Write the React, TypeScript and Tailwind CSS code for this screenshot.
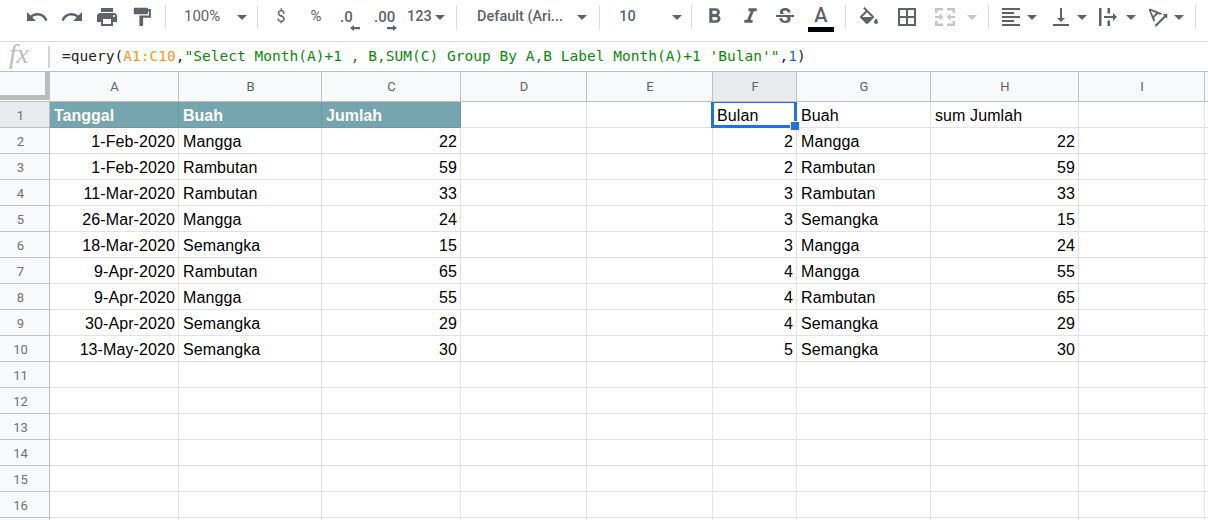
import type { ReactNode } from 'react'
import { clsx } from 'clsx'
import {
    MdBorderAll,
    MdFormatAlignLeft,
    MdFormatBold,
    MdFormatItalic,
    MdPrint,
    MdRedo,
    MdStrikethroughS,
    MdTextRotationAngleup,
    MdUndo,
    MdVerticalAlignBottom,
} from 'react-icons/md'

type Column = { name: string; width: string }

const COLUMNS: Column[] = [
    { name: 'A', width: 'w-[129px]' },
    { name: 'B', width: 'w-[143px]' },
    { name: 'C', width: 'w-[139px]' },
    { name: 'D', width: 'w-[126px]' },
    { name: 'E', width: 'w-[126px]' },
    { name: 'F', width: 'w-[84px]' },
    { name: 'G', width: 'w-[134px]' },
    { name: 'H', width: 'w-[148px]' },
    { name: 'I', width: 'w-[126px]' },
    { name: '', width: 'w-[126px]' },
]

const ROWS: string[][] = [
    ['Tanggal', 'Buah', 'Jumlah', '', '', 'Bulan', 'Buah', 'sum Jumlah'],
    ['1-Feb-2020', 'Mangga', '22', '', '', '2', 'Mangga', '22'],
    ['1-Feb-2020', 'Rambutan', '59', '', '', '2', 'Rambutan', '59'],
    ['11-Mar-2020', 'Rambutan', '33', '', '', '3', 'Rambutan', '33'],
    ['26-Mar-2020', 'Mangga', '24', '', '', '3', 'Semangka', '15'],
    ['18-Mar-2020', 'Semangka', '15', '', '', '3', 'Mangga', '24'],
    ['9-Apr-2020', 'Rambutan', '65', '', '', '4', 'Mangga', '55'],
    ['9-Apr-2020', 'Mangga', '55', '', '', '4', 'Rambutan', '65'],
    ['30-Apr-2020', 'Semangka', '29', '', '', '4', 'Semangka', '29'],
    ['13-May-2020', 'Semangka', '30', '', '', '5', 'Semangka', '30'],
    [],
    [],
    [],
    [],
    [],
    [],
    [],
]

// The last row is only partly in view and has no label
const LABELLED_ROWS = 16

const SELECTED = { row: 0, column: 5 }

const Slot = ({
    width,
    start,
    children,
}: {
    width: string
    start?: boolean
    children?: ReactNode
}) => (
    <div
        className={clsx(
            'flex h-full shrink-0 items-center whitespace-nowrap',
            start ? 'justify-start' : 'justify-center',
            width,
        )}
    >
        {children}
    </div>
)

const Separator = () => <div className="h-6 w-px shrink-0 bg-[#dadce0]" />

const Caret = ({ disabled }: { disabled?: boolean }) => (
    <svg
        width="10"
        height="5"
        viewBox="0 0 10 5"
        className={clsx(
            'mt-0.5 shrink-0',
            disabled ? 'fill-[#c4c5c7]' : 'fill-[#5f6368]',
        )}
    >
        <path d="M0 0h10L5 5z" />
    </svg>
)

const PaintFormatIcon = () => (
    <svg width="24" height="24" viewBox="0 0 24 24" fill="currentColor">
        <path d="M18 4V3.6c0-.4-.4-.8-.8-.8H4.6c-.4 0-.8.4-.8.8v4.8c0 .4.4.8.8.8h12.6c.4 0 .8-.4.8-.8V6.4h1v4.2H9.4V20c0 .6.4 1 .9 1h1.9c.5 0 .9-.4.9-1v-7.2h7.8V4z" />
    </svg>
)

const FillColorIcon = () => (
    <svg width="24" height="24" viewBox="0 0 24 24" fill="currentColor">
        <path d="M16.56 8.94 7.62 0 6.21 1.41l2.38 2.38-5.15 5.15c-.59.59-.59 1.54 0 2.12l5.5 5.5c.29.29.68.44 1.06.44s.77-.15 1.06-.44l5.5-5.5c.59-.58.59-1.53 0-2.12zM5.21 10 10 5.21 14.79 10zM19 11.5s-2 2.17-2 3.5c0 1.1.9 2 2 2s2-.9 2-2c0-1.33-2-3.5-2-3.5z" />
    </svg>
)

const MergeCellsIcon = () => (
    <svg width="22" height="20" viewBox="0 0 22 20" fill="currentColor">
        <path d="M1 1h8v2.4H3.4V6H1zM13 1h8v5h-2.4V3.4H13zM1 14h2.4v2.6H9V19H1zM18.6 14H21v5h-8v-2.4h5.6z" />
        <path d="M1 9h4.500V6.500L9.500 10l-4 3.500V11H1zM21 9h-4.500V6.500l-4 3.500 4 3.500V11H21z" />
    </svg>
)

const OverflowIcon = () => (
    <svg width="20" height="20" viewBox="0 0 20 20" fill="currentColor">
        <path d="M1 1h2.500v18H1zM9.500 1H12v5.500H9.500zM9.500 13.500H12V19H9.500z" />
        <path d="M6 9h9V6l4 4-4 4v-3H6z" />
    </svg>
)

// Digits with a small arrow hanging out at the bottom right
const DecimalIcon = ({
    text,
    increase,
}: {
    text: string
    increase?: boolean
}) => (
    <div className="flex flex-col items-end pt-1.5">
        <span className="text-[15px] leading-4 font-medium">{text}</span>
        <svg
            width="10"
            height="6"
            viewBox="0 0 10 6"
            fill="currentColor"
            className={increase ? '-mr-0.5 -scale-x-100' : '-mr-[7px]'}
        >
            <path d="M0 3 4 0v2h6v2.200H4V6z" />
        </svg>
    </div>
)

const Toolbar = () => (
    <div className="flex h-[42px] shrink-0 border-b border-[#dadce0] text-[#5f6368]">
        <div className="flex h-[33px] items-center pl-[19px] font-['Roboto',sans-serif] text-[14.5px] font-medium">
            <Slot width="w-[35px]">
                <MdUndo size={24} />
            </Slot>
            <Slot width="w-[35px]">
                <MdRedo size={24} />
            </Slot>
            <Slot width="w-[35px]">
                <MdPrint size={24} />
            </Slot>
            <Slot width="w-[41px]">
                <div className="pr-1.5">
                    <PaintFormatIcon />
                </div>
            </Slot>
            <Separator />
            <Slot width="w-[91px]" start>
                <span className="mr-4 ml-[18px] w-[37px] text-[15px] font-normal">
                    100%
                </span>
                <Caret />
            </Slot>
            <Separator />
            <Slot width="w-[46px]">
                <span className="text-[16px] font-normal">$</span>
            </Slot>
            <Slot width="w-[24px]">
                <span className="text-[15px] font-normal">%</span>
            </Slot>
            <Slot width="w-[44px] pl-[12px]" start>
                <DecimalIcon text=".0" />
            </Slot>
            <Slot width="w-[32px] pl-[2px]" start>
                <DecimalIcon text=".00" increase />
            </Slot>
            <Slot width="w-[52px] pl-[3px]" start>
                <span className="w-7">123</span>
                <Caret />
            </Slot>
            <Separator />
            <Slot width="w-[142px]">
                <span className="mr-3.5 ml-2">Default (Ari...</span>
                <Caret />
            </Slot>
            <Separator />
            <Slot width="w-[91px]">
                <span className="mr-9 ml-2.5">10</span>
                <Caret />
            </Slot>
            <Separator />
            <Slot width="w-[45px]">
                <MdFormatBold size={25} />
            </Slot>
            <Slot width="w-[26px]">
                <MdFormatItalic size={25} />
            </Slot>
            <Slot width="w-[44px]">
                <MdStrikethroughS size={24} />
            </Slot>
            <Slot width="w-[38px]" start>
                <div className="ml-px flex w-[26px] flex-col items-center pt-0.5">
                    <span className="text-[20px] leading-6">A</span>
                    <div className="h-[5px] w-full bg-black" />
                </div>
            </Slot>
            <Separator />
            <Slot width="w-[46px] pt-1">
                <FillColorIcon />
            </Slot>
            <Slot width="w-[30px]">
                <MdBorderAll size={24} />
            </Slot>
            <Slot width="w-[66px]">
                <div className="flex items-center gap-[11px] text-[#c4c5c7]">
                    <MergeCellsIcon />
                    <Caret disabled />
                </div>
            </Slot>
            <Separator />
            <Slot width="w-[57px]">
                <MdFormatAlignLeft size={24} className="mr-1" />
                <Caret />
            </Slot>
            <Slot width="w-[43px]">
                <MdVerticalAlignBottom size={24} className="mr-1" />
                <Caret />
            </Slot>
            <Slot width="w-[55px]">
                <div className="mr-2">
                    <OverflowIcon />
                </div>
                <Caret />
            </Slot>
            <Slot width="w-[51px]" start>
                <MdTextRotationAngleup size={26} className="mr-[3px] ml-[1px]" />
                <Caret />
            </Slot>
            <Separator />
        </div>
    </div>
)

const FormulaBar = () => (
    <div className="flex h-[30px] shrink-0 items-center border-b border-[#c0c0c0]">
        <div className="w-12 pb-1.5 pl-[9px] font-['Liberation_Serif',serif] text-[27px] leading-6 text-[#bdbdbd] italic">
            fx
        </div>
        <div className="h-[22px] w-0.5 bg-[#d5d5d5]" />
        <div className="ml-3 font-['DejaVu_Sans_Mono',monospace] text-[14.5px] tracking-[0.02px] whitespace-pre text-[#222]">
            =query(
            <span className="text-[#f7981d]">A1:C10</span>,
            <span className="text-[#0b8a0b]">
                "Select Month(A)+1 , B,SUM(C) Group By A,B Label Month(A)+1
                {" 'Bulan'"}"
            </span>
            ,<span className="text-[#1967d2]">1</span>)
        </div>
    </div>
)

const ColumnHeaders = () => (
    <div className="flex h-[30px] shrink-0 border-b border-[#c0c0c0] bg-[#f8f9fa]">
        <div className="h-7 w-[50px] shrink-0 border-r-[5px] border-b-[5px] border-[#bcbcbc]" />
        {COLUMNS.map((column, index) => (
            <div
                key={column.name}
                className={clsx(
                    'flex shrink-0 items-center justify-center border-r border-[#c0c0c0] pl-px font-["Roboto",sans-serif] text-[13px] text-[#5f6368]',
                    column.width,
                    index === SELECTED.column && 'bg-[#e8eaed]',
                )}
            >
                {column.name}
            </div>
        ))}
    </div>
)

const Cell = ({
    value,
    row,
    column,
}: {
    value: string
    row: number
    column: number
}) => {
    const isTableHead = row === 0 && column < 3
    const isSelected = row === SELECTED.row && column === SELECTED.column

    return (
        <div
            className={clsx(
                'relative flex h-[26px] shrink-0 items-center border-r border-b px-1 pt-0.5',
                COLUMNS[column].width,
                /^\d/.test(value) && 'justify-end pr-[3px]',
                isTableHead
                    ? 'border-[#6b9aa5] bg-[#76a5af] font-bold text-white'
                    : 'border-[#e2e3e3] tracking-[0.1px] text-black',
            )}
        >
            {value}
            {isSelected && (
                <div className="absolute top-0 -right-px -bottom-px -left-[2px] z-10 border-x-[3px] border-t border-b-[3px] border-[#1a73e8]">
                    <div className="absolute -right-[5px] -bottom-[5px] size-[9px] border-t border-l border-white bg-[#1a73e8]" />
                </div>
            )}
        </div>
    )
}

function App() {
    return (
        <div className="flex h-[520px] w-[1208px] flex-col overflow-hidden bg-white">
            <Toolbar />
            <FormulaBar />
            <ColumnHeaders />
            {ROWS.map((values, row) => (
                <div
                    key={row}
                    className="flex shrink-0 font-['Liberation_Sans',Arial,sans-serif] text-[16px] leading-5"
                >
                    <div
                        className={clsx(
                            'flex h-[26px] w-[50px] shrink-0 items-center justify-center border-r border-b border-[#c0c0c0] pt-0.5 pr-2 font-["Roboto",sans-serif] text-[13px] text-[#6f7377]',
                            row === SELECTED.row
                                ? 'bg-[#e8eaed]'
                                : 'bg-[#f8f9fa]',
                        )}
                    >
                        {row < LABELLED_ROWS && row + 1}
                    </div>
                    {COLUMNS.map((_, column) => (
                        <Cell
                            key={column}
                            value={values[column] ?? ''}
                            row={row}
                            column={column}
                        />
                    ))}
                </div>
            ))}
        </div>
    )
}

export default App
